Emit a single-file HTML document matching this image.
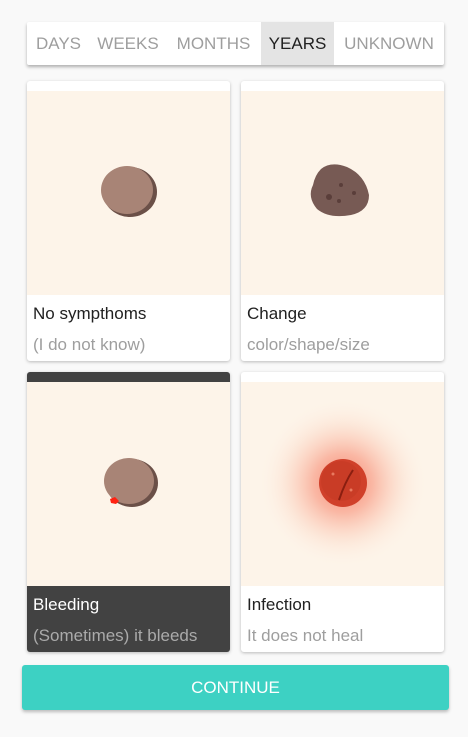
<!DOCTYPE html>
<html><head><meta charset="utf-8"><style>
*{box-sizing:border-box;margin:0;padding:0}
body{width:468px;height:737px;background:#f9f9f9;font-family:"Liberation Sans",sans-serif;position:relative;overflow:hidden}
.tabs{position:absolute;left:27px;top:22px;width:417px;height:43px;background:#fff;box-shadow:0 2px 3px rgba(0,0,0,.3);border-radius:2px;display:flex;overflow:hidden}
.tab{height:43px;line-height:43px;font-size:17px;color:#9e9e9e;text-align:center}
.tab.on{background:#e4e4e4;color:#212121}
.card{position:absolute;width:203px;height:280px;background:#fff;border-radius:3px;box-shadow:0 1px 3px rgba(0,0,0,.25);overflow:hidden}
.img{position:absolute;left:0;top:10px;width:203px;height:204px;background:#fdf4e9}
.t1{position:absolute;left:6px;top:223px;font-size:17px;color:#212121}
.t2{position:absolute;left:6px;top:254px;font-size:17px;color:#9e9e9e}
.dark{background:#424242}
.dark .t1{color:#fff}.dark .t2{color:#aaa}
.btn{position:absolute;left:22px;top:665px;width:427px;height:45px;background:#3dd1c3;border-radius:3px;box-shadow:0 2px 3px rgba(0,0,0,.25);color:#fff;font-size:17px;text-align:center;line-height:45px}
</style></head><body>
<div class="tabs">
<div class="tab" style="width:63px">DAYS</div>
<div class="tab" style="width:76px">WEEKS</div>
<div class="tab" style="width:95px">MONTHS</div>
<div class="tab on" style="width:73px">YEARS</div>
<div class="tab" style="width:110px">UNKNOWN</div>
</div>

<div class="card" style="left:27px;top:81px">
<div class="img"><svg width="203" height="204"><ellipse cx="103" cy="101" rx="27" ry="25" fill="#6b5048"/><ellipse cx="100" cy="99" rx="26" ry="24" fill="#a88476"/></svg></div>
<div class="t1">No sympthoms</div><div class="t2">(I do not know)</div></div>

<div class="card" style="left:241px;top:81px">
<div class="img"><svg width="203" height="204"><path d="M80 78 Q90 70 106 76 Q124 84 128 104 Q128 120 110 124 Q88 128 76 118 Q66 106 72 94 Q74 84 80 78Z" fill="#775a54"/><circle cx="88" cy="106" r="3" fill="#5a3e3a"/><circle cx="100" cy="94" r="2" fill="#5a3e3a"/><circle cx="98" cy="110" r="2" fill="#5a3e3a"/><circle cx="113" cy="102" r="2" fill="#5a3e3a"/></svg></div>
<div class="t1">Change</div><div class="t2">color/shape/size</div></div>

<div class="card dark" style="left:27px;top:372px">
<div class="img"><svg width="203" height="204"><ellipse cx="105" cy="101" rx="26" ry="24" fill="#6b5048"/><ellipse cx="102" cy="99" rx="25" ry="23" fill="#a88476"/><path d="M83 117 l5 -2 l4 4 l-3 3 l-5 -1z" fill="#f21"/></svg></div>
<div class="t1">Bleeding</div><div class="t2">(Sometimes) it bleeds</div></div>

<div class="card" style="left:241px;top:372px">
<div class="img"><svg width="203" height="204"><defs><radialGradient id="g"><stop offset="0" stop-color="#f46a50" stop-opacity=".8"/><stop offset=".35" stop-color="#f7866c" stop-opacity=".55"/><stop offset=".7" stop-color="#fbb9a0" stop-opacity=".2"/><stop offset="1" stop-color="#fdf4e9" stop-opacity="0"/></radialGradient></defs><circle cx="102" cy="101" r="85" fill="url(#g)"/><circle cx="102" cy="101" r="24" fill="#d0402a"/><circle cx="100" cy="99" r="20" fill="#c53a24" opacity=".6"/><path d="M98 118 Q104 100 112 88" stroke="#8a1e10" stroke-width="2" fill="none"/><circle cx="92" cy="92" r="1.5" fill="#e87a60"/><circle cx="110" cy="108" r="1.5" fill="#e87a60"/></svg></div>
<div class="t1">Infection</div><div class="t2">It does not heal</div></div>

<div class="btn">CONTINUE</div>
</body></html>
